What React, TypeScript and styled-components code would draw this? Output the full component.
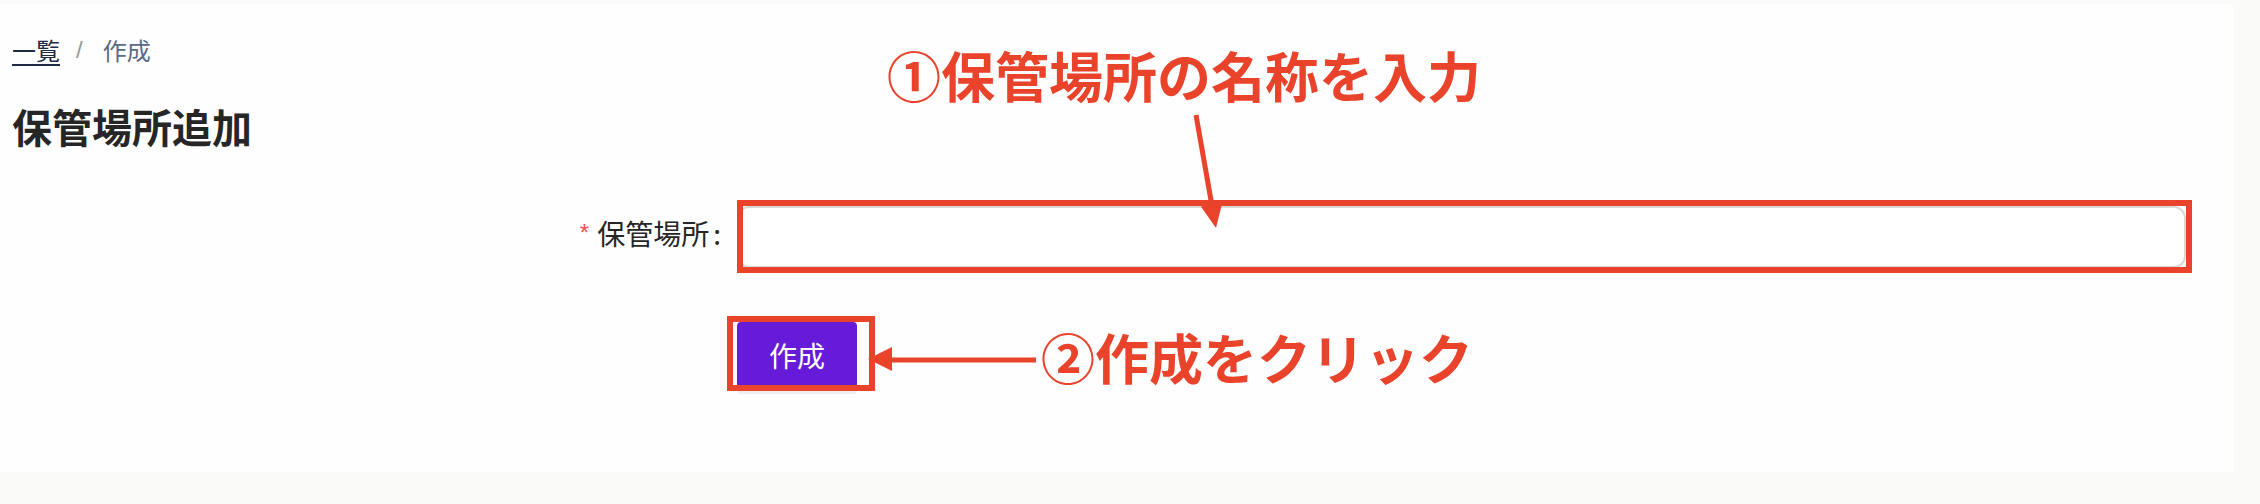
import React from "react";
import styled, { createGlobalStyle } from "styled-components";

const ACCENT = "#e9442b";

const GlobalStyle = createGlobalStyle`
  html, body {
    margin: 0;
    padding: 0;
    background: #fafaf8;
  }
  body {
    font-family: "Noto Sans CJK JP", "Noto Sans", sans-serif;
    color: #262626;
  }
`;

const Page = styled.div`
  position: relative;
  box-sizing: border-box;
  width: 2233px;
  height: 468px;
  margin-top: 4px;
  padding: 28px 0 0 12px;
  background: #fefefe;
`;

const Breadcrumb = styled.nav`
  display: flex;
  align-items: center;
  font-size: 24px;
  line-height: 36px;
`;

const Crumb = styled.a<{ $current?: boolean }>`
  color: ${p => (p.$current ? "#5b6b86" : "#1f2a44")};
  text-decoration: ${p => (p.$current ? "none" : "underline")};
  text-underline-offset: 4px;
  text-decoration-thickness: 2px;
`;

const Separator = styled.span`
  margin: 0 20px 0 16px;
  color: #9a9a9a;
  font-family: "Liberation Sans", sans-serif;
`;

const Title = styled.h1`
  margin: 30px 0 0;
  font-size: 40px;
  line-height: 56px;
  font-weight: 700;
  color: #262626;
`;

const Form = styled.form`
  display: grid;
  grid-template-columns: 709px 1449px;
  column-gap: 16px;
  row-gap: 54px;
  margin-top: 52px;
`;

const Label = styled.label`
  display: flex;
  justify-content: flex-end;
  align-items: center;
  height: 54px;
  font-size: 28px;
  color: #262626;

  &::after {
    content: ":";
    margin-left: 4px;
  }
`;

const Required = styled.span`
  margin-right: 8px;
  color: #ff4d4f;
  font-family: "Liberation Sans", sans-serif;
  font-size: 24px;
  line-height: 1;
`;

const Field = styled.div`
  position: relative;
`;

const Input = styled.input`
  box-sizing: border-box;
  display: block;
  width: 100%;
  height: 62px;
  border: 2px solid #d9d9d9;
  border-radius: 12px;
  background: #fff;
  font: inherit;
  font-size: 28px;
  outline: none;
`;

const Actions = styled.div`
  grid-column: 2;
`;

const ButtonWrap = styled.div`
  position: relative;
  display: inline-block;
`;

const SubmitButton = styled.button`
  display: block;
  width: 120px;
  height: 66px;
  border: none;
  border-radius: 4px;
  background: #661bd9;
  color: #fff;
  font-family: "Noto Sans CJK JP", sans-serif;
  font-size: 28px;
  box-shadow: 0 6px 0 #efeff3;
  cursor: pointer;
`;

const Highlight = styled.span<{ $t: number; $r: number; $b: number; $l: number }>`
  position: absolute;
  top: ${p => p.$t}px;
  right: ${p => p.$r}px;
  bottom: ${p => p.$b}px;
  left: ${p => p.$l}px;
  border: 6px solid ${ACCENT};
  pointer-events: none;
`;

const Note = styled.div<{ $top: number; $left: number }>`
  position: absolute;
  top: ${p => p.$top}px;
  left: ${p => p.$left}px;
  font-family: "Noto Sans CJK JP", sans-serif;
  font-size: 54px;
  line-height: 54px;
  font-weight: 700;
  color: ${ACCENT};
  white-space: nowrap;
`;

const Arrows = styled.svg`
  position: absolute;
  top: 0;
  left: 0;
  pointer-events: none;
`;

const App: React.FC = () => {
  return (
    <>
      <GlobalStyle />
      <Page>
        <Breadcrumb>
          <Crumb href="#">一覧</Crumb>
          <Separator>/</Separator>
          <Crumb $current>作成</Crumb>
        </Breadcrumb>
        <Title>保管場所追加</Title>
        <Form onSubmit={e => e.preventDefault()}>
          <Label htmlFor="place">
            <Required>*</Required>保管場所
          </Label>
          <Field>
            <Input id="place" />
            <Highlight $t={-6} $r={-6} $b={-5} $l={0} />
          </Field>
          <Actions>
            <ButtonWrap>
              <SubmitButton type="submit">作成</SubmitButton>
              <Highlight $t={-6} $r={-18} $b={-3} $l={-10} />
            </ButtonWrap>
          </Actions>
        </Form>

        {/* annotations drawn over the form */}
        <Note $top={44} $left={887}>①保管場所の名称を入力</Note>
        <Note $top={326} $left={1041}>②作成をクリック</Note>
        <Arrows width="2233" height="468" viewBox="0 4 2233 468">
          <line x1="1196" y1="115" x2="1212" y2="206" stroke={ACCENT} strokeWidth="5" />
          <polygon points="1200.8,206.4 1222.4,202.4 1216,228" fill={ACCENT} />
          <line x1="1036" y1="360" x2="888" y2="360" stroke={ACCENT} strokeWidth="5" />
          <polygon points="868,359 892,347 892,371" fill={ACCENT} />
        </Arrows>
      </Page>
    </>
  );
};

export default App;
